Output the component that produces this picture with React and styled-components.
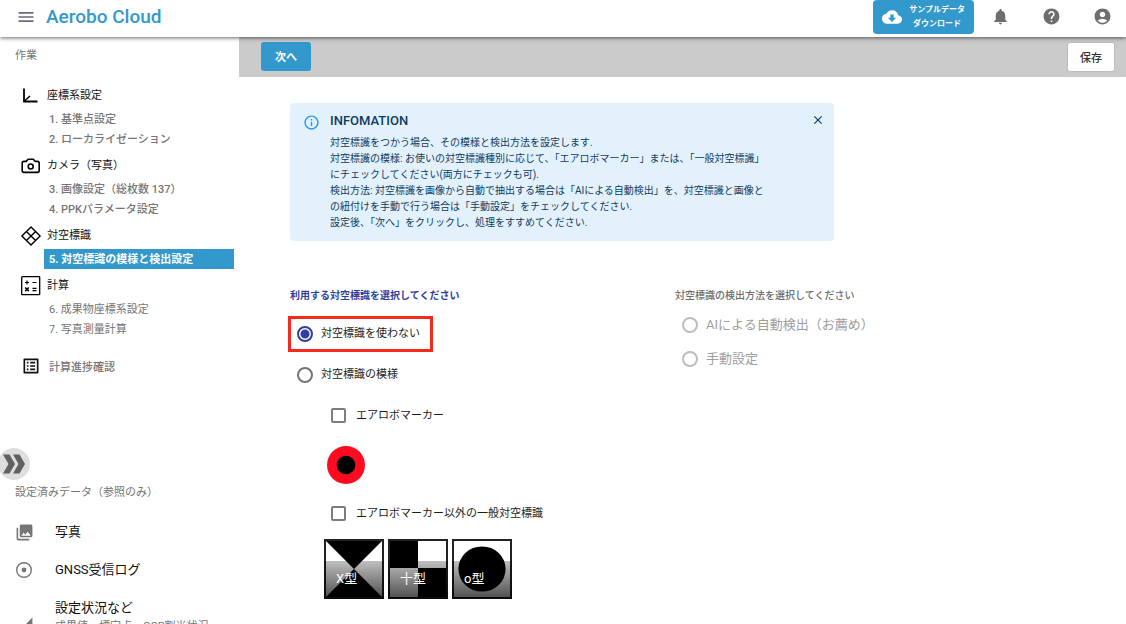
import React, { useState } from 'react';
import styled, { createGlobalStyle, css } from 'styled-components';
import {
    MdMenu,
    MdCloudDownload,
    MdNotifications,
    MdHelp,
    MdAccountCircle,
    MdPhotoLibrary,
    MdListAlt,
    MdClose,
    MdInfoOutline,
    MdSignalCellular4Bar,
} from 'react-icons/md';

const AxisIcon = () => (
    <svg width='20' height='20' viewBox='0 0 20 20' fill='none' stroke='#000'>
        <path d='M3 2.5V15.5H16.5' strokeWidth='1.8' />
        <path d='M3.5 15L9 10' strokeWidth='1.5' />
    </svg>
);

const CameraIcon = () => (
    <svg width='20' height='20' viewBox='0 0 20 20' fill='none' stroke='#000' strokeWidth='1.6' strokeLinejoin='round'>
        <path d='M3 5.4H5.2L7 3.2H12.4L14.2 5.4H16.4Q18.2 5.4 18.2 7.2V14.6Q18.2 16.4 16.4 16.4H3Q1.2 16.4 1.2 14.6V7.2Q1.2 5.4 3 5.4Z' />
        <circle cx='9.7' cy='10.5' r='2.5' />
    </svg>
);

const MarkerIcon = () => (
    <svg width='20' height='20' viewBox='0 0 20 20' fill='none' stroke='#000' strokeWidth='1.4' strokeLinejoin='round'>
        <path d='M10 0.9L19.1 10L10 19.1L0.9 10Z' />
        <path d='M5.4 5.4L14.6 14.6M14.6 5.4L5.4 14.6' />
    </svg>
);

const CalcIcon = () => (
    <svg width='20' height='20' viewBox='0 0 20 20' fill='none' stroke='#000'>
        <rect x='0.7' y='0.7' width='18' height='18' rx='0.5' strokeWidth='1.3' />
        <path d='M4 6.5H8M6 4.5V8.5M11.5 6.5H15.5' strokeWidth='1.2' />
        <path d='M4.2 11.5L7.8 15.1M7.8 11.5L4.2 15.1' strokeWidth='1.6' />
        <path d='M11.5 12.4H15.5M11.5 14.6H15.5' strokeWidth='1.2' />
    </svg>
);

const TargetIcon = () => (
    <svg width='18' height='18' viewBox='0 0 18 18'>
        <circle cx='9' cy='9' r='7.3' fill='none' stroke='#757575' strokeWidth='1.4' />
        <circle cx='9' cy='9' r='2.4' fill='#757575' />
    </svg>
);

const ExpandIcon = () => (
    <svg width='24' height='20' viewBox='0 0 24 20' fill='#616161'>
        <path d='M1 0.5H7.5L13 10L7.5 19.5H1L6.5 10Z' />
        <path d='M11 0.5H17.5L23 10L17.5 19.5H11L16.5 10Z' />
    </svg>
);

const groups = [
    {
        title: '座標系設定',
        icon: <AxisIcon />,
        items: [{ label: '1. 基準点設定' }, { label: '2. ローカライゼーション' }],
    },
    {
        title: 'カメラ（写真）',
        icon: <CameraIcon />,
        items: [{ label: '3. 画像設定（総枚数 137）' }, { label: '4. PPKパラメータ設定' }],
    },
    {
        title: '対空標識',
        icon: <MarkerIcon />,
        items: [{ label: '5. 対空標識の模様と検出設定', active: true }],
    },
    {
        title: '計算',
        icon: <CalcIcon />,
        items: [{ label: '6. 成果物座標系設定', light: true }, { label: '7. 写真測量計算', light: true }],
    },
];

const messages = [
    '対空標識をつかう場合、その模様と検出方法を設定します.',
    '対空標識の模様: お使いの対空標識種別に応じて、「エアロボマーカー」または、「一般対空標識」',
    'にチェックしてください(両方にチェックも可).',
    '検出方法: 対空標識を画像から自動で抽出する場合は「AIによる自動検出」を、対空標識と画像と',
    'の紐付けを手動で行う場合は「手動設定」をチェックしてください.',
    '設定後、「次へ」をクリックし、処理をすすめてください.',
];

const patterns = [
    { name: 'X型', shape: <path d='M0 0H56L0 56H56Z' /> },
    { name: '十型', shape: <path d='M0 0H28V56H56V27H0Z' /> },
    { name: 'o型', shape: <ellipse cx='28' cy='28' rx='23.6' ry='22.6' /> },
];

const App = () => {

    const [use, setUse] = useState('none');
    const [open, setOpen] = useState(true);

    return (
        <Page>
            <GlobalStyle />
            <Header>
                <IconButton aria-label='メニュー' $color='#6b6b7b'><MdMenu size={20} /></IconButton>
                <Brand>Aerobo Cloud</Brand>
                <Download>
                    <MdCloudDownload size={20} />
                    <span>サンプルデータ<br />ダウンロード</span>
                </Download>
                <Actions>
                    <IconButton aria-label='通知'><MdNotifications size={19} /></IconButton>
                    <IconButton aria-label='ヘルプ'><MdHelp size={19} /></IconButton>
                    <IconButton aria-label='アカウント'><MdAccountCircle size={19} /></IconButton>
                </Actions>
            </Header>
            <Body>
                <Sidebar>
                    <Caption>作業</Caption>
                    <Nav>
                        {groups.map((group) => (
                            <div key={group.title}>
                                <GroupTitle>{group.icon}{group.title}</GroupTitle>
                                {group.items.map((item) => (
                                    <NavLink key={item.label} href='#' $active={item.active} $light={item.light}>
                                        {item.label}
                                    </NavLink>
                                ))}
                            </div>
                        ))}
                        <ProgressLink href='#'><MdListAlt size={20} color='#111' />計算進捗確認</ProgressLink>
                    </Nav>
                    <Expand aria-label='開く'><ExpandIcon /></Expand>
                    <Caption>設定済みデータ（参照のみ）</Caption>
                    <DataList>
                        <DataLink href='#'><MdPhotoLibrary size={19} />写真</DataLink>
                        <DataLink href='#'><TargetIcon />GNSS受信ログ</DataLink>
                        <DataLink href='#' $tall>
                            <MdSignalCellular4Bar size={19} />
                            <span>設定状況など<small>成果値、標定点、GCP割当状況</small></span>
                        </DataLink>
                    </DataList>
                </Sidebar>
                <Main>
                    <Toolbar>
                        <NextButton>次へ</NextButton>
                        <SaveButton>保存</SaveButton>
                    </Toolbar>
                    <Content>
                        {open && (
                            <Alert>
                                <MdInfoOutline size={17} color='#2196f3' />
                                <div>
                                    <AlertTitle>INFOMATION</AlertTitle>
                                    {messages.map((line) => <AlertLine key={line}>{line}</AlertLine>)}
                                </div>
                                <CloseButton aria-label='閉じる' onClick={() => setOpen(false)}>
                                    <MdClose size={14} />
                                </CloseButton>
                            </Alert>
                        )}
                        <Form>
                            <Fieldset>
                                <Legend $active>利用する対空標識を選択してください</Legend>
                                <Option $marked>
                                    <Radio name='use' checked={use === 'none'} onChange={() => setUse('none')} />
                                    <span>対空標識を使わない</span>
                                </Option>
                                <Option>
                                    <Radio name='use' checked={use === 'pattern'} onChange={() => setUse('pattern')} />
                                    <span>対空標識の模様</span>
                                </Option>
                                <Nested>
                                    <Option><Checkbox /><span>エアロボマーカー</span></Option>
                                    <Bullseye width='38' height='38' viewBox='0 0 38 38'>
                                        <circle cx='19' cy='19' r='19' fill='#ff0a1e' />
                                        <circle cx='19' cy='19' r='9.3' />
                                    </Bullseye>
                                    <Option><Checkbox /><span>エアロボマーカー以外の一般対空標識</span></Option>
                                    <Tiles>
                                        {patterns.map((pattern) => (
                                            <Tile key={pattern.name}>
                                                <svg width='56' height='56' viewBox='0 0 56 56'>{pattern.shape}</svg>
                                                <TileName>{pattern.name}</TileName>
                                            </Tile>
                                        ))}
                                    </Tiles>
                                </Nested>
                            </Fieldset>
                            <Fieldset disabled>
                                <Legend>対空標識の検出方法を選択してください</Legend>
                                <Option $large><Radio name='detect' /><span>AIによる自動検出（お薦め）</span></Option>
                                <Option $large><Radio name='detect' /><span>手動設定</span></Option>
                            </Fieldset>
                        </Form>
                    </Content>
                </Main>
            </Body>
        </Page>
    )
}

export default App

const GlobalStyle = createGlobalStyle`
    * {
        box-sizing: border-box;
    }
    body {
        margin: 0;
        background: white;
        color: #1c1c1c;
        font-family: Roboto, 'Noto Sans CJK JP', sans-serif;
        font-size: 11px;
    }
    button {
        font-family: inherit;
        border: none;
        padding: 0;
        cursor: pointer;
    }
    a {
        text-decoration: none;
    }
    svg {
        flex-shrink: 0;
    }
`

const Page = styled.div`
    display: flex;
    flex-direction: column;
    height: 100vh;
`

const Header = styled.header`
    display: flex;
    align-items: center;
    flex-shrink: 0;
    height: 37px;
    padding: 0 14px 4px 16px;
    background: white;
    box-shadow: 0 1px 4px rgba(0, 0, 0, 0.6);
    z-index: 1;
`

const IconButton = styled.button`
    display: flex;
    background: none;
    color: ${(props) => props.$color || '#6e6e6e'};
`

const Brand = styled.h1`
    flex: 1;
    margin: 0 0 0 10px;
    color: #3398cc;
    font-size: 19px;
    line-height: 24px;
    font-weight: 500;
`

const Download = styled.button`
    display: flex;
    align-items: center;
    gap: 7px;
    height: 34px;
    padding: 0 9px;
    border-radius: 4px;
    background: #3398cc;
    color: white;
    font-size: 8px;
    line-height: 14px;
    font-weight: 700;
`

const Actions = styled.div`
    display: flex;
    gap: 32px;
    margin-left: 17px;
`

const Body = styled.div`
    display: flex;
    flex: 1;
    min-height: 0;
`

const Sidebar = styled.aside`
    flex: 0 0 239px;
    overflow-y: auto;
    scrollbar-width: none;
`

const Caption = styled.p`
    margin: 11px 0 0 15px;
    color: #757575;
    line-height: 16px;
`

const Nav = styled.nav`
    padding: 15px 5px 0 21px;
`

const GroupTitle = styled.div`
    display: flex;
    align-items: center;
    gap: 6px;
    height: 30px;
    color: #111;
    svg {
        margin-top: 4px;
    }
`

const NavLink = styled.a`
    display: block;
    margin-left: 23px;
    padding: 1px 0 0 5px;
    line-height: 19px;
    font-weight: ${(props) => (props.$light ? 400 : 500)};
    color: #757575;
    ${(props) => props.$active && css`
        background: #3398cc;
        color: white;
        font-weight: 700;
    `}
`

const ProgressLink = styled.a`
    display: flex;
    align-items: center;
    gap: 8px;
    height: 20px;
    margin-top: 17px;
    color: #757575;
    font-weight: 500;
`

const Expand = styled.button`
    display: flex;
    align-items: center;
    justify-content: center;
    width: 32px;
    height: 32px;
    margin: 72px 0 -6px -2px;
    border-radius: 50%;
    background: #dedede;
`

const DataList = styled.div`
    padding: 12px 0 0 15px;
`

const DataLink = styled.a`
    display: grid;
    grid-template-columns: 20px 1fr;
    align-items: center;
    gap: 20px;
    min-height: 38px;
    padding: ${(props) => (props.$tall ? '10px 0' : '0')};
    color: #111;
    font-size: 13px;
    line-height: 18px;
    svg {
        color: #757575;
    }
    small {
        display: block;
        min-height: 34px;
        padding-top: 2px;
        color: #757575;
        font-size: 11px;
        line-height: 16px;
    }
`

const Main = styled.main`
    flex: 1;
    min-width: 0;
    overflow-y: auto;
    scrollbar-width: none;
`

const Toolbar = styled.div`
    display: flex;
    align-items: center;
    justify-content: space-between;
    height: 40px;
    padding: 0 12px 2px 22px;
    background: #cbcbcb;
`

const NextButton = styled.button`
    height: 29px;
    padding: 0 14px;
    border-radius: 3px;
    background: #3398cc;
    color: white;
    font-size: 11px;
    font-weight: 700;
`

const SaveButton = styled.button`
    height: 28px;
    margin-top: 2px;
    padding: 0 12px;
    border-radius: 2px;
    background: white;
    box-shadow: 0 0 1px 1px #bdbdbd;
    color: #333;
    font-size: 11px;
    font-weight: 500;
`

const Content = styled.div`
    padding: 26px 24px 24px 51px;
`

const Alert = styled.section`
    display: grid;
    grid-template-columns: 17px 1fr 14px;
    gap: 10px;
    max-width: 544px;
    padding: 10px 9px 10px 13px;
    border-radius: 4px;
    background: #e3f1fd;
    color: #0d3c61;
    & > svg {
        margin-top: 1px;
    }
`

const AlertTitle = styled.h2`
    margin: 0 0 6px;
    font-size: 13px;
    line-height: 16px;
    font-weight: 500;
`

const AlertLine = styled.p`
    margin: 0;
    font-size: 10px;
    line-height: 16px;
`

const CloseButton = styled.button`
    display: flex;
    align-self: start;
    background: none;
    color: #0d3c61;
`

const Form = styled.form`
    display: grid;
    grid-template-columns: 385px 1fr;
    margin-top: 47px;
`

const Fieldset = styled.fieldset`
    min-width: 0;
    margin: 0;
    padding: 0;
    border: none;
`

const Legend = styled.legend`
    margin-bottom: ${(props) => (props.$active ? '8px' : '4px')};
    padding: 0;
    color: ${(props) => (props.$active ? '#303f9f' : '#6b6b6b')};
    font-size: 10px;
    line-height: 16px;
    font-weight: ${(props) => (props.$active ? 700 : 500)};
`

const Option = styled.label`
    display: flex;
    align-items: center;
    gap: 8px;
    width: fit-content;
    height: 41px;
    padding-left: 7px;
    span {
        padding-bottom: 4px;
    }
    ${(props) => props.$large && css`
        height: 34px;
        color: #9e9e9e;
        font-size: 13px;
    `}
    ${(props) => props.$marked && css`
        height: 36px;
        margin: 4px 0 2px -2px;
        padding: 0 10px 0 6px;
        border: 3px solid #f5291d;
    `}
`

const Radio = styled.input.attrs({ type: 'radio' })`
    appearance: none;
    flex-shrink: 0;
    width: 16px;
    height: 16px;
    margin: 0;
    border: 2px solid #757575;
    border-radius: 50%;
    &:checked {
        border-color: #303f9f;
        background: radial-gradient(circle, #303f9f 4px, white 5px);
    }
    &:disabled {
        border-color: #bdbdbd;
    }
`

const Checkbox = styled.input.attrs({ type: 'checkbox' })`
    appearance: none;
    width: 15px;
    height: 15px;
    margin: 0 2px 0 0;
    border: 2px solid #7d7d7d;
    border-radius: 2px;
    &:checked {
        background: #303f9f;
    }
`

const Nested = styled.div`
    padding-left: 34px;
`

const Bullseye = styled.svg`
    display: block;
    margin: 10px 0 9px 3px;
`

const Tiles = styled.div`
    display: flex;
    gap: 4px;
    margin-top: 5px;
`

const Tile = styled.div`
    position: relative;
    width: 60px;
    height: 60px;
    border: 2px solid #222;
    background: white;
    svg {
        display: block;
    }
`

const TileName = styled.div`
    position: absolute;
    inset: 20px -2px -2px;
    padding: 9px 12px;
    background: linear-gradient(rgba(0, 0, 0, 0.25), rgba(0, 0, 0, 0.7));
    color: white;
    font-size: 13px;
    line-height: 18px;
`
